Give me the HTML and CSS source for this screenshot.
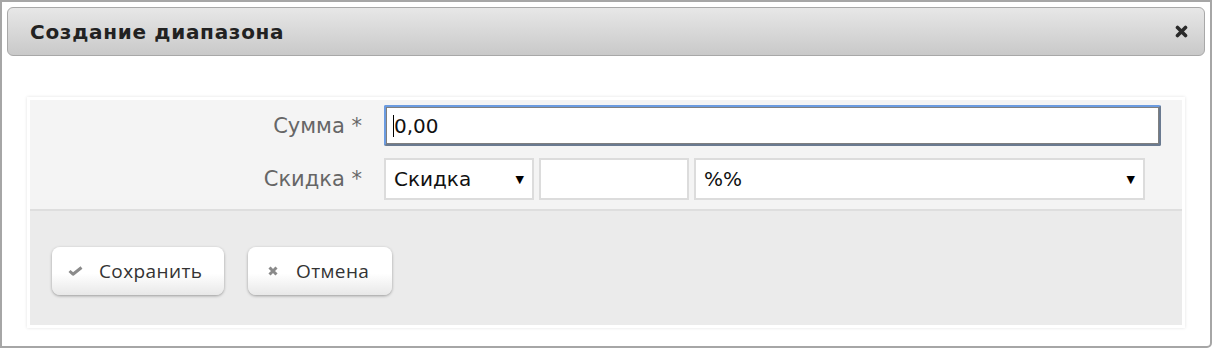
FILE: index.html
```html
<!DOCTYPE html>
<html lang="ru">
<head>
    <meta charset="UTF-8">
    <title>Создание диапазона</title>
    <link rel="stylesheet" href="styles.css">
</head>
<body>
<div class="dialog">
    <div class="dialog-header">
        <span class="dialog-title">Создание диапазона</span>
        <svg class="close-icon" width="13" height="13" viewBox="0 0 13 13">
            <path d="M2.5 2.5 L10.5 10.5 M10.5 2.5 L2.5 10.5" stroke="#2a2a2a" stroke-width="3.6" stroke-linecap="round"/>
        </svg>
    </div>

    <div class="form-box">
        <div class="form-body">
            <div class="form-row">
                <label class="form-label">Сумма *</label>
                <div class="field input-focus"><span class="caret"></span>0,00</div>
            </div>
            <div class="form-row">
                <label class="form-label">Скидка *</label>
                <div class="field select select-type">Скидка<span class="arrow">▼</span></div>
                <div class="field input-value"></div>
                <div class="field select select-unit">%%<span class="arrow">▼</span></div>
            </div>
        </div>
        <div class="form-footer">
            <button class="btn btn-save">
                <svg width="15" height="10" viewBox="0 0 15 10">
                    <path d="M1.5 5 L5 8.2 L13.5 1.5" stroke="#8a8a8a" stroke-width="3" fill="none" stroke-linejoin="round"/>
                </svg>
                Сохранить
            </button>
            <button class="btn btn-cancel">
                <svg width="10" height="10" viewBox="0 0 10 10">
                    <path d="M1.5 1.5 L8.5 8.5 M8.5 1.5 L1.5 8.5" stroke="#8a8a8a" stroke-width="3"/>
                </svg>
                Отмена
            </button>
        </div>
    </div>
</div>
</body>
</html>
```

FILE: styles.css
```css
body {
    margin: 0;
    background: #fff;
    font-family: "DejaVu Sans", Verdana, sans-serif;
}
.dialog {
    border: 2px solid #a6a6a6;
    border-bottom-right-radius: 5px;
    padding: 5px;
    width: 1198px;
    height: 334px;
}
.dialog-header {
    height: 47px;
    border: 1px solid #a8a8a8;
    border-radius: 6px;
    background: linear-gradient(#e7e7e7, #c9c9c9);
    display: flex;
    align-items: center;
    justify-content: space-between;
    padding: 0 16px 0 22px;
}
.dialog-title {
    font-weight: bold;
    font-size: 20px;
    color: #222;
    letter-spacing: 0.7px;
}
.close-icon {
    display: block;
}
.form-box {
    margin: 41px 0 0 20px;
    width: 1152px;
    border: 3px solid #fff;
    box-shadow: 0 0 3px rgba(0, 0, 0, 0.12);
}
.form-body {
    background: #f4f4f4;
    padding: 5px 0 9px 0;
    border-bottom: 2px solid #dedede;
}
.form-row {
    display: flex;
    align-items: center;
    gap: 5px;
    margin-bottom: 12px;
}
.form-row:last-child {
    margin-bottom: 0;
}
.form-label {
    width: 332px;
    text-align: right;
    margin-right: 17px;
    font-size: 21px;
    color: #666;
}
.field {
    background: #fff;
    border: 2px solid #dcdcdc;
    box-sizing: border-box;
    height: 42px;
    display: flex;
    align-items: center;
    padding: 0 8px;
    font-size: 20px;
    color: #111;
}
.input-focus {
    width: 777px;
    height: 41px;
    border: 2px solid #6b9be0;
    border-right-color: #6a7a90;
    border-bottom-color: #6a7a90;
    border-radius: 2px;
    box-shadow: inset 0 0 0 1px #7f7f7f;
    padding-left: 7px;
}
.caret {
    width: 1px;
    height: 22px;
    background: #000;
}
.select {
    justify-content: space-between;
}
.arrow {
    font-size: 11px;
    color: #000;
}
.select-type {
    width: 150px;
}
.input-value {
    width: 150px;
}
.select-unit {
    width: 451px;
}
.form-footer {
    background: #ebebeb;
    height: 114px;
    box-sizing: border-box;
    padding: 6px 0 0 22px;
    display: flex;
    align-items: center;
    gap: 24px;
}
.btn {
    height: 48px;
    border: none;
    border-radius: 8px;
    background: linear-gradient(#ffffff 55%, #e8e8e8);
    box-shadow: 0 1px 3px rgba(0, 0, 0, 0.35);
    font-family: "Open Sans", sans-serif;
    font-size: 19px;
    letter-spacing: 0.4px;
    color: #333;
    display: flex;
    align-items: center;
    gap: 16px;
    padding: 0 0 0 16px;
}
.btn-save {
    width: 172px;
}
.btn-cancel {
    width: 144px;
    padding-left: 20px;
    gap: 18px;
}
```
